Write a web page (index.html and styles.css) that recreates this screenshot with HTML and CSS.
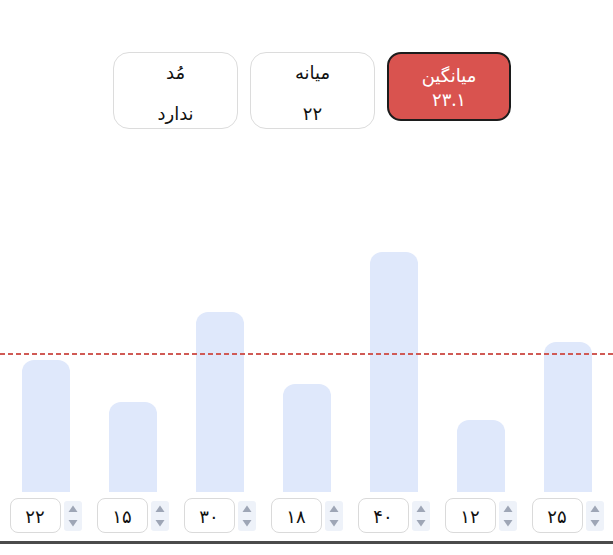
FILE: index.html
```html
<!DOCTYPE html>
<html lang="fa">
<head>
<meta charset="utf-8">
<title>آمار</title>
<link rel="stylesheet" href="styles.css">
</head>
<body>
<main class="page">
  <section class="stats" dir="rtl">
    <div class="card active">
      <div class="card-title">میانگین</div>
      <div class="card-value">۲۳.۱</div>
    </div>
    <div class="card">
      <div class="card-title">میانه</div>
      <div class="card-value">۲۲</div>
    </div>
    <div class="card">
      <div class="card-title">مُد</div>
      <div class="card-value">ندارد</div>
    </div>
  </section>

  <section class="chart">
    <div class="plot">
      <div class="slot"><div class="bar" style="height:132px"></div></div>
      <div class="slot"><div class="bar" style="height:90px"></div></div>
      <div class="slot"><div class="bar" style="height:180px"></div></div>
      <div class="slot"><div class="bar" style="height:108px"></div></div>
      <div class="slot"><div class="bar" style="height:240px"></div></div>
      <div class="slot"><div class="bar" style="height:72px"></div></div>
      <div class="slot"><div class="bar" style="height:150px"></div></div>
      <div class="avg-line" style="bottom:138.6px"></div>
    </div>
    <div class="controls">
      <div class="ctl"><div class="num">۲۲</div><div class="spin"><svg viewBox="0 0 18 30" width="18" height="30"><path d="M9 4.5 L13.5 11 H4.5 Z"/><path d="M9 25.5 L13.5 19 H4.5 Z"/></svg></div></div>
      <div class="ctl"><div class="num">۱۵</div><div class="spin"><svg viewBox="0 0 18 30" width="18" height="30"><path d="M9 4.5 L13.5 11 H4.5 Z"/><path d="M9 25.5 L13.5 19 H4.5 Z"/></svg></div></div>
      <div class="ctl"><div class="num">۳۰</div><div class="spin"><svg viewBox="0 0 18 30" width="18" height="30"><path d="M9 4.5 L13.5 11 H4.5 Z"/><path d="M9 25.5 L13.5 19 H4.5 Z"/></svg></div></div>
      <div class="ctl"><div class="num">۱۸</div><div class="spin"><svg viewBox="0 0 18 30" width="18" height="30"><path d="M9 4.5 L13.5 11 H4.5 Z"/><path d="M9 25.5 L13.5 19 H4.5 Z"/></svg></div></div>
      <div class="ctl"><div class="num">۴۰</div><div class="spin"><svg viewBox="0 0 18 30" width="18" height="30"><path d="M9 4.5 L13.5 11 H4.5 Z"/><path d="M9 25.5 L13.5 19 H4.5 Z"/></svg></div></div>
      <div class="ctl"><div class="num">۱۲</div><div class="spin"><svg viewBox="0 0 18 30" width="18" height="30"><path d="M9 4.5 L13.5 11 H4.5 Z"/><path d="M9 25.5 L13.5 19 H4.5 Z"/></svg></div></div>
      <div class="ctl"><div class="num">۲۵</div><div class="spin"><svg viewBox="0 0 18 30" width="18" height="30"><path d="M9 4.5 L13.5 11 H4.5 Z"/><path d="M9 25.5 L13.5 19 H4.5 Z"/></svg></div></div>
    </div>
  </section>
</main>
</body>
</html>
```

FILE: styles.css
```css
html, body {
  margin: 0;
  padding: 0;
  background: #fff;
}

body {
  font-family: "Noto Sans", "DejaVu Sans", sans-serif;
  font-size: 16px;
  color: #111;
}

.stats {
  display: flex;
  justify-content: center;
  align-items: flex-start;
  gap: 12px;
  padding: 52px 0 0 11px;
  font-size: 18px;
}

.card {
  box-sizing: border-box;
  width: 125px;
  height: 77px;
  border: 1px solid #dcdcdc;
  border-radius: 16px;
  display: flex;
  flex-direction: column;
  align-items: center;
  padding-top: 7px;
}

.card-title {
  line-height: 24px;
}

.card-value {
  line-height: 24px;
  margin-top: 17px;
}

.card.active {
  width: 124px;
  height: 69px;
  background: #d9534f;
  color: #fff;
  border: 2px solid #1c1c1c;
  border-radius: 14px;
  padding-top: 9px;
}

.card.active .card-title,
.card.active .card-value {
  line-height: 24px;
  margin-top: 0;
}

.chart {
  border-bottom: 3px solid #4b4b4b;
  padding-bottom: 8px;
}

.plot {
  position: relative;
  height: 363px;
  display: flex;
  justify-content: center;
  align-items: flex-end;
}

.slot {
  width: 87px;
  display: flex;
  justify-content: center;
}

.bar {
  width: 48px;
  background: #dfe8fb;
  border-radius: 12px 12px 0 0;
}

.avg-line {
  position: absolute;
  left: 0;
  right: 0;
  height: 2px;
  margin-bottom: -2px;
  background: repeating-linear-gradient(to right, #d05a55 0 5px, transparent 5px 8px);
}

.controls {
  display: flex;
  justify-content: center;
  margin-top: 6px;
}

.ctl {
  width: 87px;
  display: flex;
  justify-content: center;
  align-items: center;
  gap: 3px;
}

.num {
  box-sizing: border-box;
  width: 51px;
  height: 35px;
  border: 1px solid #dadada;
  border-radius: 8px;
  display: flex;
  align-items: center;
  justify-content: center;
  font-size: 18px;
}

.spin {
  width: 18px;
  height: 30px;
  background: #eef2f9;
  border-radius: 3px;
}

.spin svg {
  display: block;
  fill: #9ea6b6;
}
```
